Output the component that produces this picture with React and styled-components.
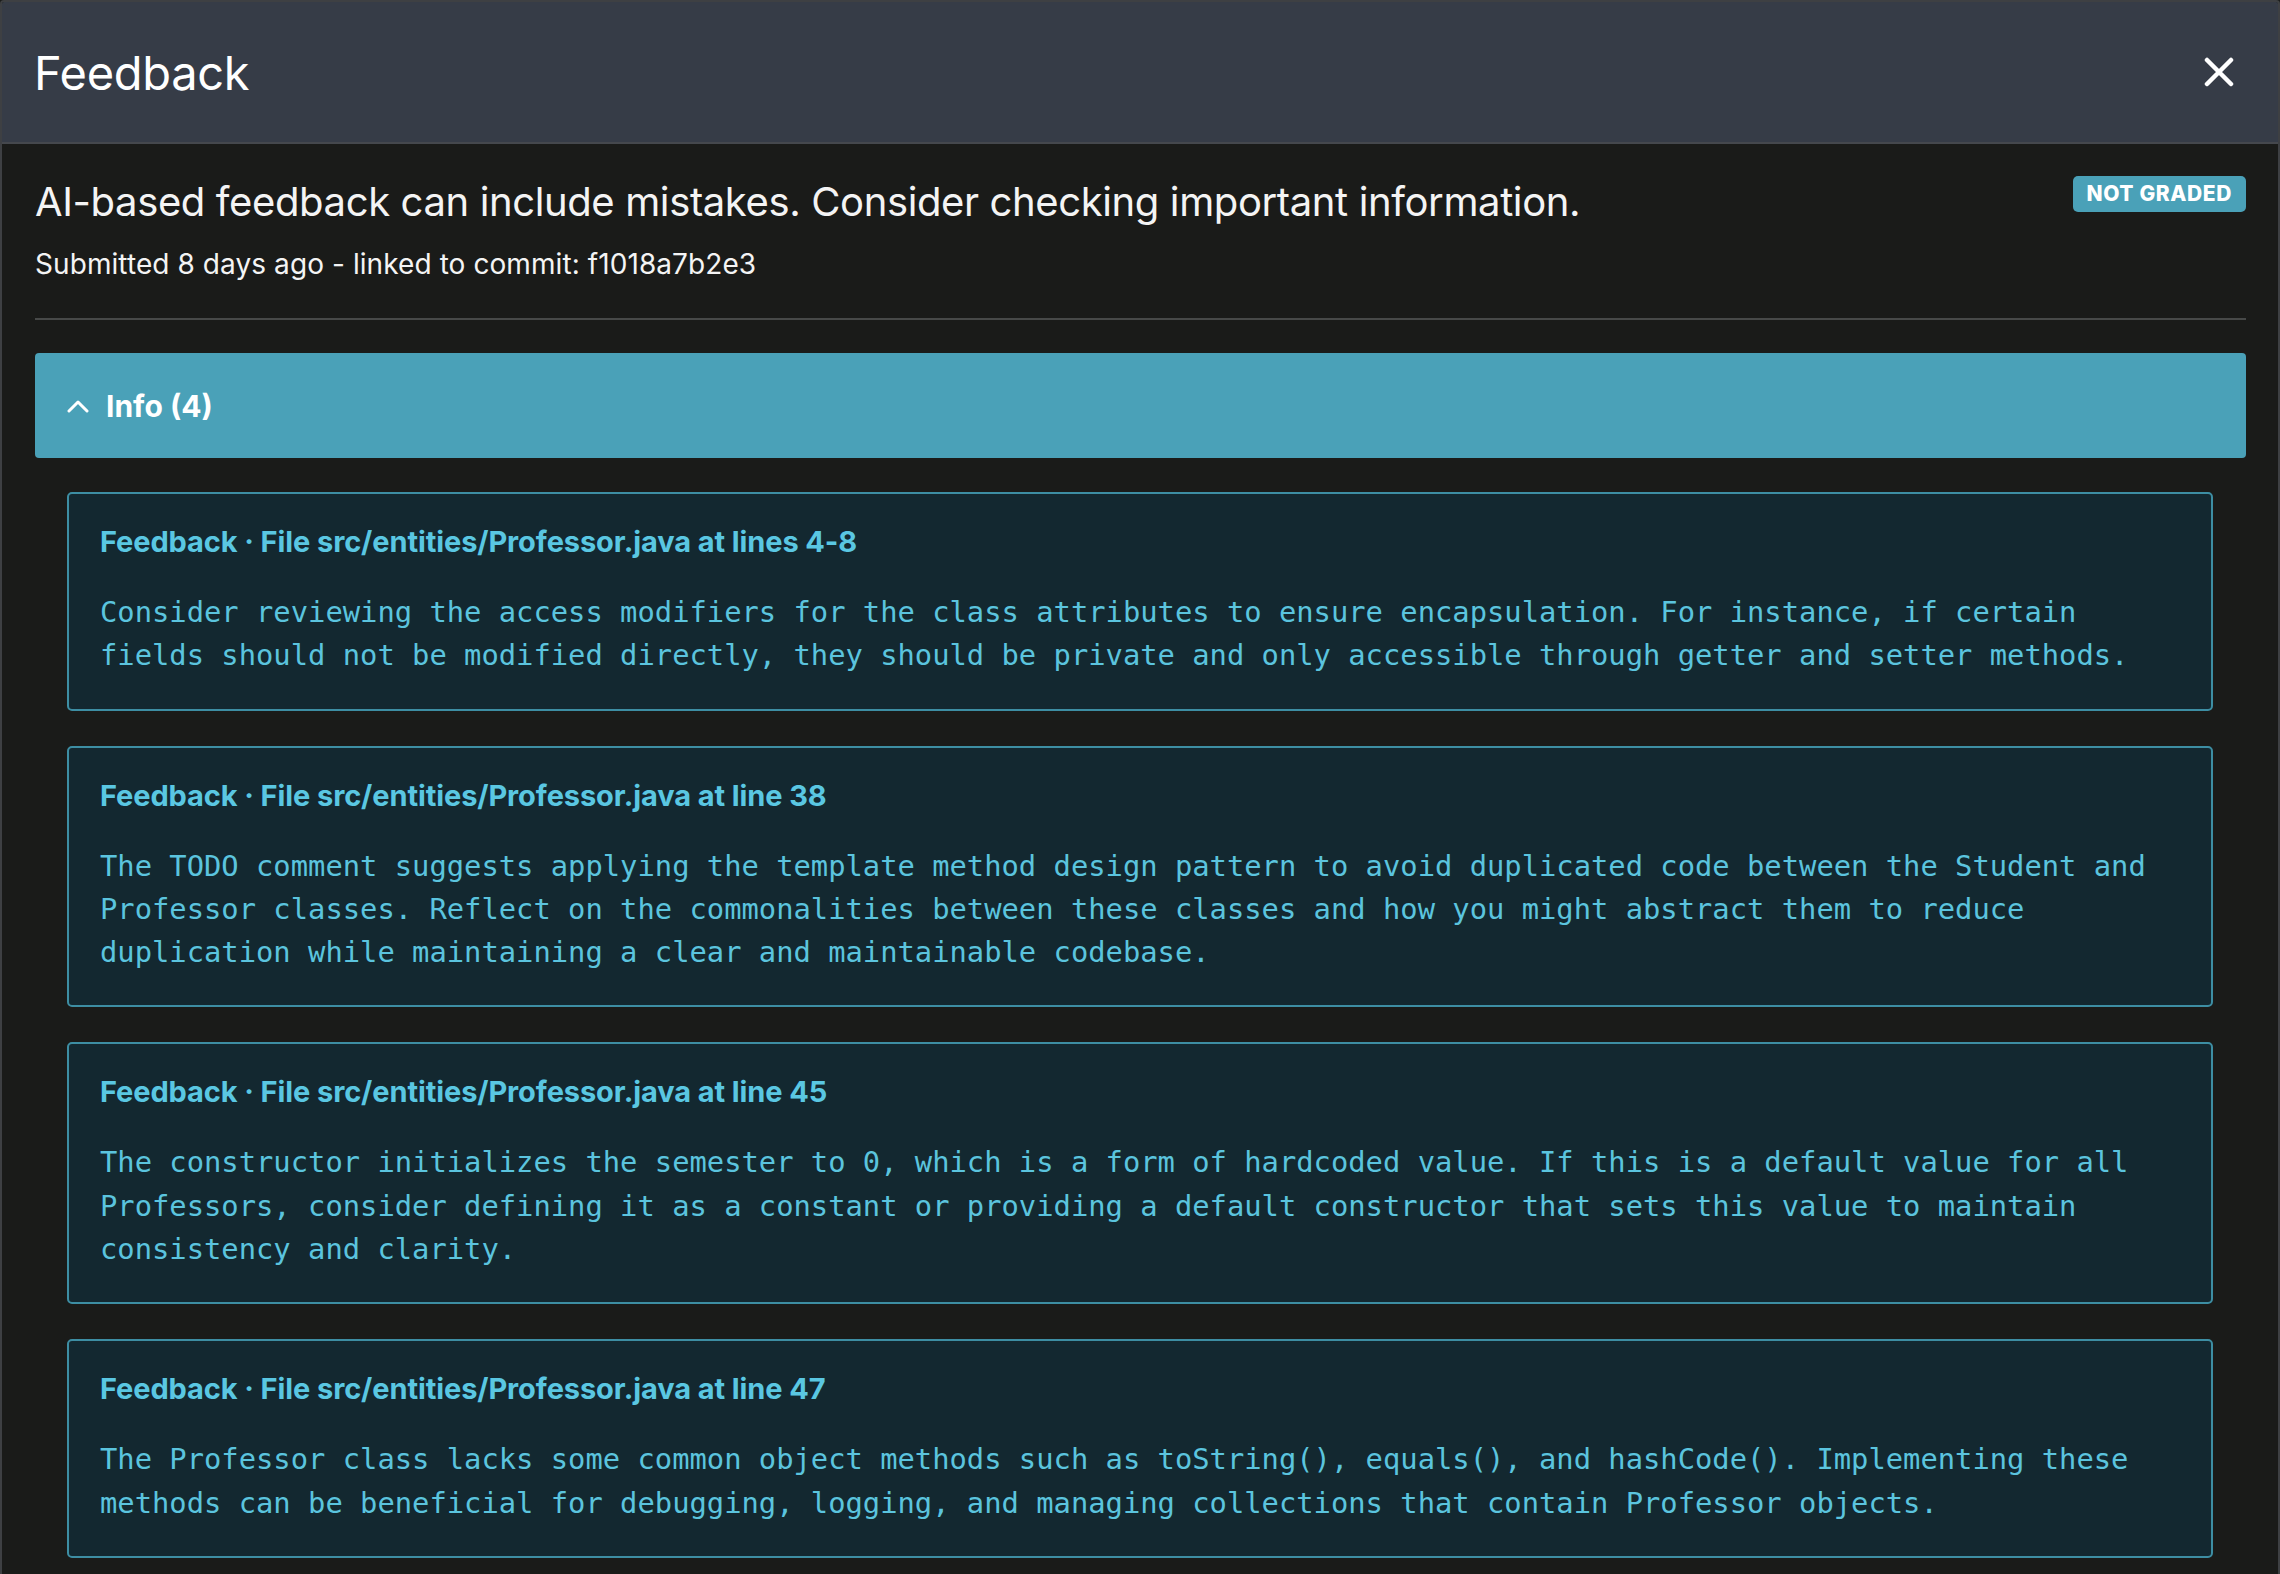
import React from "react";
import styled, { createGlobalStyle } from "styled-components";

const GlobalStyle = createGlobalStyle`
  html, body {
    margin: 0;
    padding: 0;
    background: #1a1b19;
  }
  * {
    box-sizing: border-box;
  }
`;

const feedbacks = [
  {
    id: 1,
    title: "Feedback · File src/entities/Professor.java at lines 4-8",
    text: "Consider reviewing the access modifiers for the class attributes to ensure encapsulation. For instance, if certain fields should not be modified directly, they should be private and only accessible through getter and setter methods.",
  },
  {
    id: 2,
    title: "Feedback · File src/entities/Professor.java at line 38",
    text: "The TODO comment suggests applying the template method design pattern to avoid duplicated code between the Student and Professor classes. Reflect on the commonalities between these classes and how you might abstract them to reduce duplication while maintaining a clear and maintainable codebase.",
  },
  {
    id: 3,
    title: "Feedback · File src/entities/Professor.java at line 45",
    text: "The constructor initializes the semester to 0, which is a form of hardcoded value. If this is a default value for all Professors, consider defining it as a constant or providing a default constructor that sets this value to maintain consistency and clarity.",
  },
  {
    id: 4,
    title: "Feedback · File src/entities/Professor.java at line 47",
    text: "The Professor class lacks some common object methods such as toString(), equals(), and hashCode(). Implementing these methods can be beneficial for debugging, logging, and managing collections that contain Professor objects.",
  },
];

function CloseIcon() {
  return (
    <svg width="30" height="30" viewBox="0 0 30 30">
      <path
        d="M3 3 L27 27 M27 3 L3 27"
        stroke="#ffffff"
        strokeWidth="4.5"
        strokeLinecap="round"
        fill="none"
      />
    </svg>
  );
}

function ChevronUp() {
  return (
    <svg width="22" height="14" viewBox="0 0 22 14">
      <polyline
        points="2,12 11,3 20,12"
        stroke="#ffffff"
        strokeWidth="3"
        strokeLinecap="round"
        strokeLinejoin="round"
        fill="none"
      />
    </svg>
  );
}

function App() {
  return (
    <>
      <GlobalStyle />
      <Modal>
        <Header>
          <Title>Feedback</Title>
          <CloseButton aria-label="Close">
            <CloseIcon />
          </CloseButton>
        </Header>

        <Body>
          <TopRow>
            <div>
              <Heading>
                AI-based feedback can include mistakes. Consider checking important information.
              </Heading>
              <Submitted>Submitted 8 days ago - linked to commit: f1018a7b2e3</Submitted>
            </div>
            <Badge>Not graded</Badge>
          </TopRow>

          <Divider />

          <Accordion>
            <AccordionHeader>
              <ChevronUp />
              <span>Info (4)</span>
            </AccordionHeader>

            <CardList>
              {feedbacks.map((item) => (
                <Card key={item.id}>
                  <CardTitle>{item.title}</CardTitle>
                  <CardText>{item.text}</CardText>
                </Card>
              ))}
            </CardList>
          </Accordion>
        </Body>
      </Modal>
    </>
  );
}

export default App;

const Modal = styled.div`
  display: flex;
  flex-direction: column;
  height: 100vh;
  overflow: hidden;
  border: 2px solid #3e4043;
  border-bottom: none;
  border-radius: 4px 4px 0 0;
  background: #1a1b19;
  font-family: Inter, "Liberation Sans", sans-serif;
`;

const Header = styled.div`
  display: flex;
  align-items: center;
  justify-content: space-between;
  flex-shrink: 0;
  height: 142px;
  padding: 0 33px 0 32px;
  background: #363c47;
  border-bottom: 2px solid #45484d;
`;

const Title = styled.h1`
  margin: 0;
  font-size: 47px;
  font-weight: 400;
  color: #ffffff;
  letter-spacing: -0.3px;
`;

const CloseButton = styled.button`
  display: flex;
  padding: 0;
  margin-right: 11px;
  border: none;
  background: none;
  cursor: pointer;
`;

const Body = styled.div`
  padding: 34px 32px 0 33px;
`;

const TopRow = styled.div`
  display: flex;
  justify-content: space-between;
  align-items: flex-start;
`;

const Heading = styled.h2`
  margin: 0;
  font-size: 40px;
  line-height: 48px;
  font-weight: 400;
  color: #f4f4f4;
  letter-spacing: -0.38px;
`;

const Submitted = styled.div`
  margin-top: 21px;
  font-size: 28px;
  line-height: 34px;
  color: #f4f4f4;
  letter-spacing: 0.08px;
`;

const Badge = styled.span`
  margin-top: -2px;
  padding: 0 14px;
  height: 36px;
  line-height: 36px;
  border-radius: 5px;
  background: #4aa1b8;
  color: #ffffff;
  font-size: 21px;
  font-weight: 800;
  text-transform: uppercase;
  letter-spacing: 0.6px;
  white-space: nowrap;
`;

const Divider = styled.hr`
  margin: 37px 0 33px;
  border: none;
  height: 2px;
  background: #474948;
`;

const Accordion = styled.section``;

const AccordionHeader = styled.div`
  display: flex;
  align-items: center;
  gap: 17px;
  height: 105px;
  padding: 0 32px;
  border-radius: 4px;
  background: #4aa1b8;
  color: #ffffff;
  font-size: 30px;
  font-weight: 700;
`;

const CardList = styled.div`
  display: flex;
  flex-direction: column;
  gap: 35px;
  padding: 34px 33px 35px 32px;
`;

const Card = styled.div`
  padding: 31px 31px 31px;
  border: 2px solid #3d8ea3;
  border-radius: 5px;
  background: #132830;
`;

const CardTitle = styled.div`
  font-size: 29px;
  line-height: 34px;
  font-weight: 700;
  color: #5ac7e2;
  letter-spacing: -0.1px;
`;

const CardText = styled.p`
  margin: 32px 0 0;
  max-width: 119.5ch;
  font-family: "DejaVu Sans Mono", "Liberation Mono", monospace;
  font-size: 28.8px;
  line-height: 43.3px;
  color: #5bc4de;
`;
